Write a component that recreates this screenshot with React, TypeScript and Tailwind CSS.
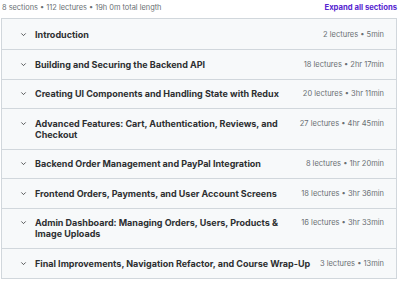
const sections = [
  { title: "Introduction", meta: "2 lectures • 5min" },
  { title: "Building and Securing the Backend API", meta: "18 lectures • 2hr 17min" },
  { title: "Creating UI Components and Handling State with Redux", meta: "20 lectures • 3hr 11min" },
  { title: "Advanced Features: Cart, Authentication, Reviews, and Checkout", meta: "27 lectures • 4hr 45min" },
  { title: "Backend Order Management and PayPal Integration", meta: "8 lectures • 1hr 20min" },
  { title: "Frontend Orders, Payments, and User Account Screens", meta: "18 lectures • 3hr 36min" },
  { title: "Admin Dashboard: Managing Orders, Users, Products & Image Uploads", meta: "16 lectures • 3hr 33min" },
  { title: "Final Improvements, Navigation Refactor, and Course Wrap-Up", meta: "3 lectures • 13min" },
];

function Chevron() {
  return (
    <svg width="7" height="7" viewBox="0 0 8 8" className="shrink-0 mt-[2px]">
      <path d="M1.5 2.75 L4 5.25 L6.5 2.75" fill="none" stroke="#2d2f31" strokeWidth="0.9" />
    </svg>
  );
}

export default function App() {
  return (
    <div className="w-[400px] h-[281px] bg-white overflow-hidden font-['Inter',sans-serif] text-[#2d2f31]">
      <div className="flex items-end justify-between pl-[2px] pr-[3px] h-[13px]">
        <span className="text-[7.4px] text-[#6a6f73] leading-[10px]">
          8 sections • 112 lectures • 19h 0m total length
        </span>
        <button className="text-[7.7px] font-bold text-[#5624d0] leading-[10px]">Expand all sections</button>
      </div>
      <div className="mt-[5px] ml-[1px] mr-[3px] border border-[#d1d7dc]">
        {sections.map((s, i) => (
          <div
            key={i}
            className={`flex items-start gap-[6px] bg-[#f7f9fa] pl-[18px] pr-[12px] ${i > 0 ? "border-t border-[#d1d7dc] py-[8.75px]" : "pt-[10px] pb-[9px]"}`}
          >
            <Chevron />
            <div className="flex-1 pl-[2px] text-[9px] font-bold leading-[11px]">{s.title}</div>
            <div className="shrink-0 text-[7.5px] text-[#6a6f73] leading-[11px]">{s.meta}</div>
          </div>
        ))}
      </div>
    </div>
  );
}
